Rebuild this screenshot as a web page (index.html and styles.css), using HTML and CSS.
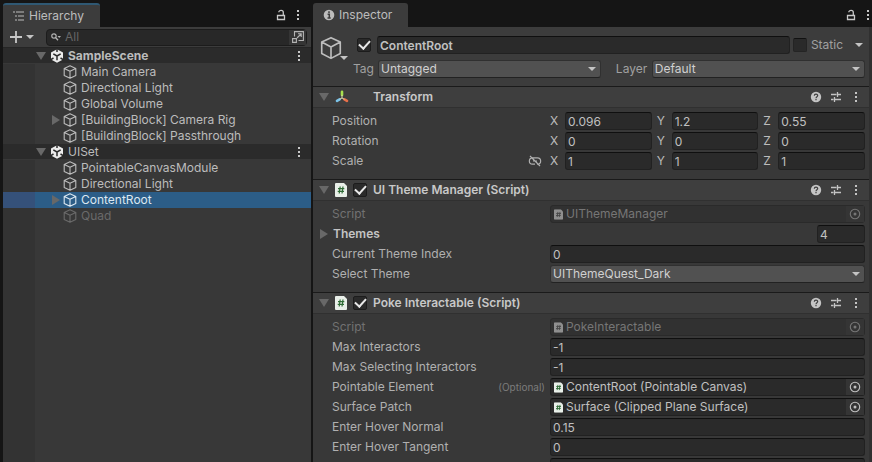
FILE: index.html
```html
<!DOCTYPE html>
<html lang="en">
<head>
  <meta charset="UTF-8">
  <meta name="viewport" content="width=device-width, initial-scale=1.0">
  <title>Scene Editor</title>
  <link rel="stylesheet" href="styles.css">
</head>
<body>
  <svg class="sprite" aria-hidden="true">
    <symbol id="cube" viewBox="0 0 22 22">
      <path d="M11 1.500 19.500 5.500V16L11 20.500 2.500 16V5.500ZM2.500 5.500 11 10 19.500 5.500M11 10V20.500" fill="none" stroke="currentColor" stroke-width="1.500" stroke-linejoin="round"/>
    </symbol>
    <symbol id="cube-small" viewBox="0 0 14 14">
      <path d="M7 .8 12.800 3.400V10.400L7 13.300 1.200 10.400V3.400ZM1.200 3.400 7 6.300 12.800 3.400M7 6.300V13.300" fill="none" stroke="currentColor" stroke-width="1.100" stroke-linejoin="round"/>
    </symbol>
    <symbol id="scene" viewBox="0 0 14 14">
      <path d="M7 .3 13 3.500V10.500L7 13.700 1 10.500V3.500Z" fill="#ececec"/>
      <path d="M7 7V11.300M7 7 3.300 4.900M7 7 10.700 4.900" stroke="#2b2b2b" stroke-width="1.500"/>
      <path d="M7 0V3M0 11 3.500 9M14 11 10.500 9" stroke="#2b2b2b" stroke-width="1.500"/>
    </symbol>
    <symbol id="lock" viewBox="0 0 10 12">
      <path d="M1.500 6.500H8.500V10.500H1.500ZM2.800 3.300C2.800 .9 7.300 .7 7.300 3.500V6.500" fill="none" stroke="currentColor" stroke-width="1.300"/>
    </symbol>
    <symbol id="dots" viewBox="0 0 4 12">
      <path d="M1 1H3V3H1ZM1 5H3V7H1ZM1 9H3V11H1Z" fill="currentColor"/>
    </symbol>
    <symbol id="help" viewBox="0 0 12 12">
      <circle cx="6" cy="6" r="5.200" fill="currentColor"/>
      <path d="M4.300 4.800C4.300 2.600 7.700 2.700 7.700 4.600 7.700 5.700 6 5.700 6 7.200M6 8V9.300" fill="none" stroke="#3e3e3e" stroke-width="1.200"/>
    </symbol>
    <symbol id="sliders" viewBox="0 0 12 12">
      <path d="M1 3.500H6.500M8 3.500H11M7.500 1V6M1 8.500H3.500M5 8.500H11M4.500 6V11" fill="none" stroke="currentColor" stroke-width="1.300"/>
    </symbol>
    <symbol id="script" viewBox="0 0 12 14">
      <path d="M0 1Q0 0 1 0H9L12 3V13Q12 14 11 14H1Q0 14 0 13Z" fill="#e9efe9"/>
      <path d="M5.200 3.500 4.200 10.500M8 3.500 7 10.500M3 5.700H9.300M2.700 8.300H9" fill="none" stroke="#2e6b35" stroke-width="1.200"/>
    </symbol>
    <symbol id="picker" viewBox="0 0 12 12">
      <circle cx="6" cy="6" r="4.700" fill="none" stroke="currentColor" stroke-width="1.100"/>
      <circle cx="6" cy="6" r="1.500" fill="currentColor"/>
    </symbol>
  </svg>

  <div class="editor">
    <section class="panel hierarchy">
      <header class="tab-bar">
        <h2 class="tab active">
          <svg width="12" height="10" viewBox="0 0 12 10"><path d="M0 1H2M3 1H11M2 5H4M5 5H11M2 9H4M5 9H11" stroke="currentColor" stroke-width="1.200"/></svg>
          Hierarchy
        </h2>
        <div class="tab-actions">
          <button type="button" aria-label="Lock"><svg width="10" height="12"><use href="#lock"/></svg></button>
          <button type="button" aria-label="Menu"><svg width="4" height="12"><use href="#dots"/></svg></button>
        </div>
      </header>

      <div class="toolbar">
        <button type="button" class="add" aria-label="Add object">
          <svg width="12" height="12" viewBox="0 0 12 12"><path d="M6 0V12M0 6H12" stroke="currentColor" stroke-width="1.800"/></svg>
          <span class="caret"></span>
        </button>
        <div class="search">
          <svg width="10" height="8" viewBox="0 0 10 8"><circle cx="3" cy="3" r="2.200" fill="none" stroke="currentColor" stroke-width="1.200"/><path d="M4.500 4.500 7 7.300" stroke="currentColor" stroke-width="1.300"/><path d="M6.500 3H10L8.200 5Z" fill="currentColor"/></svg>
          <input type="text" placeholder="All" aria-label="Search hierarchy">
          <button type="button" aria-label="Open search window">
            <svg width="12" height="12" viewBox="0 0 12 12"><path d="M2.500 5.500V.6H11.400V9.500H6.500M.6 7.600H4.400V11.400H.6ZM5 7 9 3M6 2.800H9.200V6" fill="none" stroke="currentColor" stroke-width="1.100"/></svg>
          </button>
        </div>
      </div>

      <ul class="tree">
        <li class="scene"><span class="arrow down"></span><svg class="icon"><use href="#scene"/></svg><strong>SampleScene</strong><button type="button" aria-label="Scene menu"><svg width="4" height="12"><use href="#dots"/></svg></button></li>
        <li class="item"><svg class="icon"><use href="#cube-small"/></svg>Main Camera</li>
        <li class="item"><svg class="icon"><use href="#cube-small"/></svg>Directional Light</li>
        <li class="item"><svg class="icon"><use href="#cube-small"/></svg>Global Volume</li>
        <li class="item parent"><span class="arrow right"></span><svg class="icon"><use href="#cube-small"/></svg>[BuildingBlock] Camera Rig</li>
        <li class="item"><svg class="icon"><use href="#cube-small"/></svg>[BuildingBlock] Passthrough</li>
        <li class="scene"><span class="arrow down"></span><svg class="icon"><use href="#scene"/></svg>UISet<button type="button" aria-label="Scene menu"><svg width="4" height="12"><use href="#dots"/></svg></button></li>
        <li class="item"><svg class="icon"><use href="#cube-small"/></svg>PointableCanvasModule</li>
        <li class="item"><svg class="icon"><use href="#cube-small"/></svg>Directional Light</li>
        <li class="item parent selected"><span class="arrow right"></span><svg class="icon"><use href="#cube-small"/></svg>ContentRoot</li>
        <li class="item inactive"><svg class="icon"><use href="#cube-small"/></svg>Quad</li>
      </ul>
    </section>

    <section class="panel inspector">
      <header class="tab-bar">
        <h2 class="tab">
          <svg width="12" height="12" viewBox="0 0 12 12"><circle cx="6" cy="6" r="5.300" fill="currentColor"/><path d="M6 2.200V4M4.600 5.300H6.300V9M4.500 9H7.700" fill="none" stroke="#3c3c3c" stroke-width="1.500"/></svg>
          Inspector
        </h2>
        <div class="tab-actions">
          <button type="button" aria-label="Lock"><svg width="10" height="12"><use href="#lock"/></svg></button>
          <button type="button" aria-label="Menu"><svg width="4" height="12"><use href="#dots"/></svg></button>
        </div>
      </header>

      <div class="inspector-body">
        <div class="object-header">
          <button type="button" class="object-icon" aria-label="Object icon">
            <svg width="24" height="24"><use href="#cube"/></svg>
            <span class="caret"></span>
          </button>
          <div class="object-fields">
            <div class="object-row">
              <input type="checkbox" class="check" aria-label="Active" checked>
              <input type="text" class="field name" aria-label="Name" value="ContentRoot">
              <input type="checkbox" class="check" id="static">
              <label for="static" class="static-label">Static</label>
              <button type="button" class="static-menu" aria-label="Static flags"><span class="caret"></span></button>
            </div>
            <div class="object-row">
              <label for="tag" class="tag-label">Tag</label>
              <span class="select tag"><select id="tag"><option>Untagged</option></select></span>
              <label for="layer" class="layer-label">Layer</label>
              <span class="select layer"><select id="layer"><option>Default</option></select></span>
            </div>
          </div>
        </div>

        <section class="component">
          <header class="component-header">
            <span class="arrow down"></span>
            <svg class="component-icon" width="14" height="14" viewBox="0 0 14 14"><g fill="none" stroke-width="2.600" stroke-linecap="round"><path d="M7 1.800V5" stroke="#a6e04c"/><path d="M4.600 9.300 2 10.800" stroke="#7cc4ea"/><path d="M9.400 9.300 12 10.800" stroke="#e8704a"/></g><path d="M7 5V8L4.600 9.300M7 8 9.400 9.300" fill="none" stroke="#d8d8b0" stroke-width="1"/></svg>
            <h3 class="no-toggle">Transform</h3>
            <div class="component-actions">
              <button type="button" aria-label="Help"><svg width="12" height="12"><use href="#help"/></svg></button>
              <button type="button" aria-label="Presets"><svg width="12" height="12"><use href="#sliders"/></svg></button>
              <button type="button" aria-label="Menu"><svg width="4" height="12"><use href="#dots"/></svg></button>
            </div>
          </header>
          <div class="props">
            <div class="prop">
              <span class="prop-label">Position</span>
              <div class="vector">
                <label for="px">X</label><input type="text" class="field" id="px" value="0.096">
                <label for="py">Y</label><input type="text" class="field" id="py" value="1.2">
                <label for="pz">Z</label><input type="text" class="field" id="pz" value="0.55">
              </div>
            </div>
            <div class="prop">
              <span class="prop-label">Rotation</span>
              <div class="vector">
                <label for="rx">X</label><input type="text" class="field" id="rx" value="0">
                <label for="ry">Y</label><input type="text" class="field" id="ry" value="0">
                <label for="rz">Z</label><input type="text" class="field" id="rz" value="0">
              </div>
            </div>
            <div class="prop">
              <span class="prop-label">Scale
                <button type="button" class="link-scale" aria-label="Constrain proportions"><svg width="14" height="12" viewBox="0 0 14 12"><path d="M6.500 2.800H4.500C.3 2.800 .3 9.200 4.500 9.200H7M6 2.800H9.500C13.700 2.800 13.700 9.200 9.500 9.200H9M5 6H9M2 1 12 11" fill="none" stroke="currentColor" stroke-width="1.200"/></svg></button>
              </span>
              <div class="vector">
                <label for="sx">X</label><input type="text" class="field" id="sx" value="1">
                <label for="sy">Y</label><input type="text" class="field" id="sy" value="1">
                <label for="sz">Z</label><input type="text" class="field" id="sz" value="1">
              </div>
            </div>
          </div>
        </section>

        <section class="component">
          <header class="component-header">
            <span class="arrow down"></span>
            <svg class="component-icon" width="12" height="14"><use href="#script"/></svg>
            <input type="checkbox" class="check" aria-label="Enable UI Theme Manager" checked>
            <h3>UI Theme Manager (Script)</h3>
            <div class="component-actions">
              <button type="button" aria-label="Help"><svg width="12" height="12"><use href="#help"/></svg></button>
              <button type="button" aria-label="Presets"><svg width="12" height="12"><use href="#sliders"/></svg></button>
              <button type="button" aria-label="Menu"><svg width="4" height="12"><use href="#dots"/></svg></button>
            </div>
          </header>
          <div class="props">
            <div class="prop disabled">
              <span class="prop-label">Script</span>
              <div class="field object"><svg width="9" height="11" viewBox="0 0 12 14"><use href="#script"/></svg><span>UIThemeManager</span><button type="button" aria-label="Pick script" disabled><svg width="12" height="12"><use href="#picker"/></svg></button></div>
            </div>
            <div class="prop foldout">
              <span class="arrow right"></span>
              <label class="prop-label" for="themes">Themes</label>
              <input type="text" class="field" id="themes" value="4">
            </div>
            <div class="prop">
              <label class="prop-label" for="theme-index">Current Theme Index</label>
              <input type="text" class="field" id="theme-index" value="0">
            </div>
            <div class="prop">
              <label class="prop-label" for="theme">Select Theme</label>
              <span class="select"><select id="theme"><option>UIThemeQuest_Dark</option></select></span>
            </div>
          </div>
        </section>

        <section class="component">
          <header class="component-header">
            <span class="arrow down"></span>
            <svg class="component-icon" width="12" height="14"><use href="#script"/></svg>
            <input type="checkbox" class="check" aria-label="Enable Poke Interactable" checked>
            <h3>Poke Interactable (Script)</h3>
            <div class="component-actions">
              <button type="button" aria-label="Help"><svg width="12" height="12"><use href="#help"/></svg></button>
              <button type="button" aria-label="Presets"><svg width="12" height="12"><use href="#sliders"/></svg></button>
              <button type="button" aria-label="Menu"><svg width="4" height="12"><use href="#dots"/></svg></button>
            </div>
          </header>
          <div class="props">
            <div class="prop disabled">
              <span class="prop-label">Script</span>
              <div class="field object"><svg width="9" height="11" viewBox="0 0 12 14"><use href="#script"/></svg><span>PokeInteractable</span><button type="button" aria-label="Pick script" disabled><svg width="12" height="12"><use href="#picker"/></svg></button></div>
            </div>
            <div class="prop">
              <label class="prop-label" for="max">Max Interactors</label>
              <input type="text" class="field" id="max" value="-1">
            </div>
            <div class="prop">
              <label class="prop-label" for="max-selecting">Max Selecting Interactors</label>
              <input type="text" class="field" id="max-selecting" value="-1">
            </div>
            <div class="prop">
              <span class="prop-label">Pointable Element <small>(Optional)</small></span>
              <div class="field object"><svg width="9" height="11" viewBox="0 0 12 14"><use href="#script"/></svg><span>ContentRoot (Pointable Canvas)</span><button type="button" aria-label="Pick pointable element"><svg width="12" height="12"><use href="#picker"/></svg></button></div>
            </div>
            <div class="prop">
              <span class="prop-label">Surface Patch</span>
              <div class="field object"><svg width="9" height="11" viewBox="0 0 12 14"><use href="#script"/></svg><span>Surface (Clipped Plane Surface)</span><button type="button" aria-label="Pick surface patch"><svg width="12" height="12"><use href="#picker"/></svg></button></div>
            </div>
            <div class="prop">
              <label class="prop-label" for="hover-normal">Enter Hover Normal</label>
              <input type="text" class="field" id="hover-normal" value="0.15">
            </div>
            <div class="prop">
              <label class="prop-label" for="hover-tangent">Enter Hover Tangent</label>
              <input type="text" class="field" id="hover-tangent" value="0">
            </div>
            <div class="prop">
              <span class="prop-label"></span>
              <input type="text" class="field" aria-label="Exit hover">
            </div>
          </div>
        </section>
      </div>
    </section>
  </div>
</body>
</html>
```
FILE: styles.css
```css
* {
  box-sizing: border-box;
}

body {
  margin: 0;
  background: #151515;
  color: #bcbcbc;
  font-family: Inter, "Liberation Sans", sans-serif;
  font-size: 12px;
  line-height: 16px;
}

button,
input,
select {
  margin: 0;
  padding: 0;
  border: 0;
  background: none;
  color: inherit;
  font: inherit;
}

button {
  display: flex;
  align-items: center;
  justify-content: center;
}

svg {
  display: block;
  flex: none;
}

h2,
h3 {
  margin: 0;
  font-size: 12px;
}

.sprite {
  position: absolute;
  width: 0;
  height: 0;
}

.editor {
  display: grid;
  grid-template-columns: 308fr 559fr;
  gap: 2px;
  height: 100vh;
  padding-left: 3px;
  overflow: hidden;
}

.panel {
  display: flex;
  flex-direction: column;
  min-width: 0;
  min-height: 0;
}

/* Tabs */
.tab-bar {
  display: flex;
  justify-content: space-between;
  flex: none;
  height: 27px;
  padding-top: 3px;
}

.tab {
  display: flex;
  align-items: center;
  gap: 4px;
  padding: 0 16px 0 10px;
  border-radius: 3px 3px 0 0;
  background: #3c3c3c;
  font-weight: 400;
}

.tab.active {
  border-top: 2px solid #2f5873;
}

.tab-actions {
  display: flex;
  align-items: center;
  gap: 10px;
  padding-right: 11px;
  color: #c8c8c8;
}

.inspector .tab-actions {
  padding-right: 2px;
}

/* Hierarchy */
.toolbar {
  display: flex;
  align-items: center;
  flex: none;
  height: 20px;
  padding: 0 4px 0 7px;
  background: #3c3c3c;
}

.add {
  gap: 4px;
  color: #c8c8c8;
}

.caret {
  border: 4px solid transparent;
  border-top-color: #c4c4c4;
  border-bottom: 0;
}

.search {
  display: flex;
  align-items: center;
  flex: 1;
  height: 17px;
  margin-left: 12px;
  padding-left: 4px;
  border: 1px solid #1c1c1c;
  border-radius: 4px;
  background: #282828;
  color: #b4b4b4;
}

.search input {
  flex: 1;
  min-width: 0;
  padding-left: 4px;
}

.search input::placeholder {
  color: #666;
  opacity: 1;
}

.search button {
  width: 17px;
  height: 15px;
  background: #353535;
}

.tree {
  flex: 1;
  margin: 0;
  padding: 0;
  border-top: 1px solid #252525;
  background: linear-gradient(to right, #333 32px, #383838 32px);
  list-style: none;
}

.tree li {
  display: flex;
  align-items: center;
  gap: 4px;
  height: 16px;
}

.tree .icon {
  width: 14px;
  height: 14px;
}

.tree .item {
  padding-left: 60px;
}

.tree .parent {
  padding-left: 49px;
}

.tree .scene {
  padding: 0 10px 0 33px;
  border-bottom: 1px solid #383838;
  background: #2b2b2b;
}

.tree .scene button {
  margin-left: auto;
  color: #c8c8c8;
}

.tree .selected {
  background: linear-gradient(to right, #35517a 32px, #2c5d87 32px);
  color: #dce8f2;
}

.tree .inactive {
  color: #6a6a6a;
}

.arrow {
  flex: none;
  border: 5px solid transparent;
}

.arrow.down {
  border-top: 8px solid #686868;
  border-bottom: 0;
}

.arrow.right {
  border-width: 5px 0 5px 8px;
  border-left-color: #686868;
}

.tree .arrow.right {
  margin-right: -1px;
}

/* Inspector */
.inspector-body {
  flex: 1;
  min-height: 0;
  border-right: 3px solid #303030;
  background: #383838;
  overflow: hidden;
}

.object-header {
  display: flex;
  padding: 9px 4px 8px 6px;
  background: #3c3c3c;
}

.object-icon {
  align-items: flex-end;
  align-self: flex-start;
  width: 28px;
  margin-right: 10px;
  color: #bebebe;
}

.object-icon .caret {
  margin-left: -3px;
}

.object-fields {
  display: flex;
  flex: 1;
  flex-direction: column;
  gap: 6px;
  min-width: 0;
}

.object-row {
  display: flex;
  align-items: center;
}

.field {
  width: 100%;
  height: 18px;
  min-width: 0;
  padding: 0 2px;
  border: 1px solid #212121;
  border-top-color: #0f0f0f;
  border-radius: 3px;
  background: #2a2a2a;
  color: #c0c0c0;
}

.name {
  flex: 1;
  margin: 0 3px 0 6px;
  font-weight: 600;
}

.check {
  display: grid;
  flex: none;
  place-items: center;
  width: 14px;
  height: 14px;
  border: 1px solid #1c1c1c;
  border-radius: 2px;
  background: #2a2a2a;
  appearance: none;
}

.check:checked::before {
  content: "";
  width: 9px;
  height: 5px;
  margin-bottom: 3px;
  border: solid #e8e8e8;
  border-width: 0 0 2px 2px;
  transform: rotate(-48deg);
}

.name + .check {
  border-color: #242424;
  border-top-color: #111;
}

.static-label {
  margin-left: 4px;
  color: #a0a0a0;
}

.static-menu {
  margin-left: 12px;
  padding-right: 2px;
}

.tag-label {
  width: 25px;
  margin-left: -4px;
  color: #a0a0a0;
}

.layer-label {
  width: 36px;
  margin-left: 15px;
  color: #a0a0a0;
}

.select {
  display: flex;
  align-items: center;
  height: 18px;
  min-width: 0;
  padding-right: 4px;
  border: 1px solid #303030;
  border-bottom-color: #222;
  border-radius: 3px;
  background: #515151;
  color: #d0d0d0;
}

.select::after {
  content: "";
  border: 4px solid transparent;
  border-top-color: #c4c4c4;
  border-bottom: 0;
}

.select select {
  flex: 1;
  min-width: 0;
  padding-left: 2px;
  appearance: none;
}

.select.tag {
  flex: 223 1 0;
}

.select.layer {
  flex: 213 1 0;
}

.component-header {
  display: flex;
  align-items: center;
  height: 22px;
  padding: 0 7px 0 6px;
  border-top: 1px solid #1a1a1a;
  border-bottom: 1px solid #303030;
  background: #3e3e3e;
}

.component-icon {
  margin: 0 6px;
}

.component-header h3 {
  margin-left: 6px;
  color: #c8c8c8;
  font-weight: 600;
}

.component-header .no-toggle {
  margin-left: 18px;
}

.component-actions {
  display: flex;
  gap: 8px;
  margin-left: auto;
  color: #c4c4c4;
}

.component-actions button:last-child {
  width: 12px;
}

.props {
  padding: 3px 4px 8px 19px;
}

.prop {
  display: grid;
  grid-template-columns: minmax(0, 218fr) minmax(0, 315fr);
  align-items: center;
  height: 20px;
}

.prop-label {
  display: flex;
  align-items: center;
  justify-content: space-between;
  color: #b0b0b0;
}

.prop-label small {
  margin-right: 5px;
  color: #7c7c7c;
  font-size: 10px;
}

.link-scale {
  margin-right: 8px;
}

.vector {
  display: grid;
  grid-template-columns: 15px minmax(0, 1fr) 20px minmax(0, 1fr) 20px minmax(0, 1fr);
  align-items: center;
}

.vector label:not(:first-child) {
  padding-left: 5px;
}

.object {
  display: flex;
  align-items: center;
  padding: 0 0 0 3px;
}

.object > span {
  flex: 1;
  padding-left: 3px;
  overflow: hidden;
  white-space: nowrap;
}

.object button {
  width: 18px;
  height: 16px;
  background: #353535;
}

.disabled .prop-label {
  color: #727272;
}

.disabled .object {
  border-color: #2a2a2a;
  background: #313131;
  color: #767676;
}

.disabled .object > svg {
  filter: grayscale(1);
  opacity: 0.5;
}

.foldout {
  grid-template-columns: 8px minmax(0, 1fr) 48px;
  margin-left: -12px;
}

.foldout .prop-label {
  padding-left: 5px;
  color: #c4c4c4;
  font-weight: 600;
}
```
